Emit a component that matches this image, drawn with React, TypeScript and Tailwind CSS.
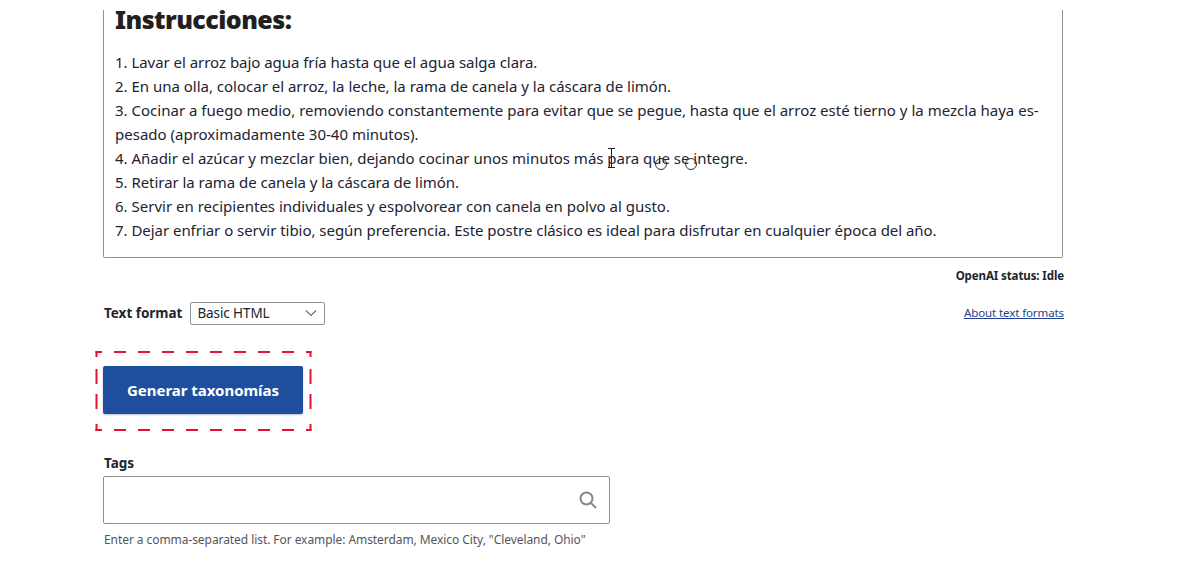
const font = { fontFamily: '"Noto Sans", "Open Sans", sans-serif' };

const lines = [
  { t: "1. Lavar el arroz bajo agua fría hasta que el agua salga clara.", c: "tracking-[-0.035px]" },
  { t: "2. En una olla, colocar el arroz, la leche, la rama de canela y la cáscara de limón.", c: "tracking-[-0.01px]" },
  { t: "3. Cocinar a fuego medio, removiendo constantemente para evitar que se pegue, hasta que el arroz esté tierno y la mezcla haya es-", c: "tracking-[0.01px]" },
  { t: "pesado (aproximadamente 30-40 minutos).", c: "tracking-[0.005px]" },
  { t: "4. Añadir el azúcar y mezclar bien, dejando cocinar unos minutos más para que se integre.", c: "tracking-[-0.02px]" },
  { t: "5. Retirar la rama de canela y la cáscara de limón.", c: "tracking-[-0.04px]" },
  { t: "6. Servir en recipientes individuales y espolvorear con canela en polvo al gusto.", c: "tracking-[0.005px]" },
  { t: "7. Dejar enfriar o servir tibio, según preferencia. Este postre clásico es ideal para disfrutar en cualquier época del año.", c: "tracking-[-0.036px]" },
];

export default function App() {
  return (
    <div className="h-[576px] w-[1179px] overflow-hidden bg-white pl-[103px] pt-[10px] text-[#222330] relative" style={font}>
      <div className="w-[961px]">
        <div className="relative h-[248px] w-[960px] rounded-b-[2px] border border-t-0 border-[#8e929c] pl-[11px]">
          <h2 className="h-[18px] text-[25px] leading-[18px] font-black tracking-[-0.55px] text-[#231f20]">Instrucciones:</h2>
          <div className="pt-[22px] text-[15px] leading-[24px] whitespace-nowrap">
            {lines.map((l) => (
              <p key={l.t} className={l.c}>{l.t}</p>
            ))}
          </div>
          <svg className="absolute left-[500px] top-[138px]" width="95" height="26" viewBox="0 0 95 26" fill="none">
            <path d="M4 0.5h7M7.5 0.5v19M4 19.5h7" stroke="#222" strokeWidth="1" />
            <circle cx="57" cy="16" r="5.5" stroke="#333" strokeWidth="1" />
            <circle cx="87" cy="16" r="5.5" stroke="#333" strokeWidth="1" />
          </svg>
        </div>
        <p className="mt-[9px] h-[17px] text-right text-[11.5px] leading-[17px] font-bold tracking-[-0.1px]">OpenAI status: Idle</p>
        <div className="mt-[17px] flex h-[24px] items-center justify-between">
          <div className="flex items-center gap-[8px] pl-[1px]">
            <span className="text-[13.5px] font-bold tracking-[-0.02px]">Text format</span>
            <div className="flex h-[23px] w-[135px] items-center justify-between rounded-[2px] border border-[#8e929c] pl-[6px] pr-[7px] text-[13.5px] tracking-[-0.1px]">
              <span>Basic HTML</span>
              <svg width="12" height="8" viewBox="0 0 12 8" fill="none">
                <path d="M1 1.5l5 5 5-5" stroke="#6b6c72" strokeWidth="1.1" />
              </svg>
            </div>
          </div>
          <a className="text-[11.5px] tracking-[-0.1px] text-[#1f3f8f] underline decoration-[#1f3f8f]">About text formats</a>
        </div>
        <button className="mt-[41px] block h-[48px] w-[200px] rounded-[2px] bg-[#1f4e9e] text-[15px] font-bold tracking-[-0.03px] text-white shadow-[0_1px_2px_rgba(0,0,0,0.25)]">
          Generar taxonomías
        </button>
        <label className="mt-[40px] block h-[18px] pl-[1px] text-[13.5px] leading-[18px] font-bold">Tags</label>
        <div className="mt-[4px] flex h-[48px] w-[507px] items-center justify-end rounded-[2px] border border-[#8e929c] pr-[12px]">
          <svg width="18" height="18" viewBox="0 0 18 18" fill="none">
            <circle cx="7.5" cy="7.5" r="6" stroke="#868686" strokeWidth="2" />
            <path d="M12 12l5 5" stroke="#868686" strokeWidth="2" />
          </svg>
        </div>
        <p className="mt-[7px] pl-[1px] text-[12px] leading-[18px] tracking-[-0.07px] text-[#55565b]">Enter a comma-separated list. For example: Amsterdam, Mexico City, "Cleveland, Ohio"</p>
      </div>
      <svg className="absolute left-[95px] top-[350px]" width="218" height="82" viewBox="0 0 218 82" fill="none">
        <g stroke="#e4112f" strokeWidth="2">
          <path d="M0.5 2H216.5M0.5 80H216.5" strokeDasharray="12 12" strokeDashoffset="5.5" />
          <path d="M1.5 1v6M1.5 19v15M1.5 44v15M1.5 74v7M215.5 1v6M215.5 19v15M215.5 44v15M215.5 74v7" />
        </g>
      </svg>
    </div>
  );
}
